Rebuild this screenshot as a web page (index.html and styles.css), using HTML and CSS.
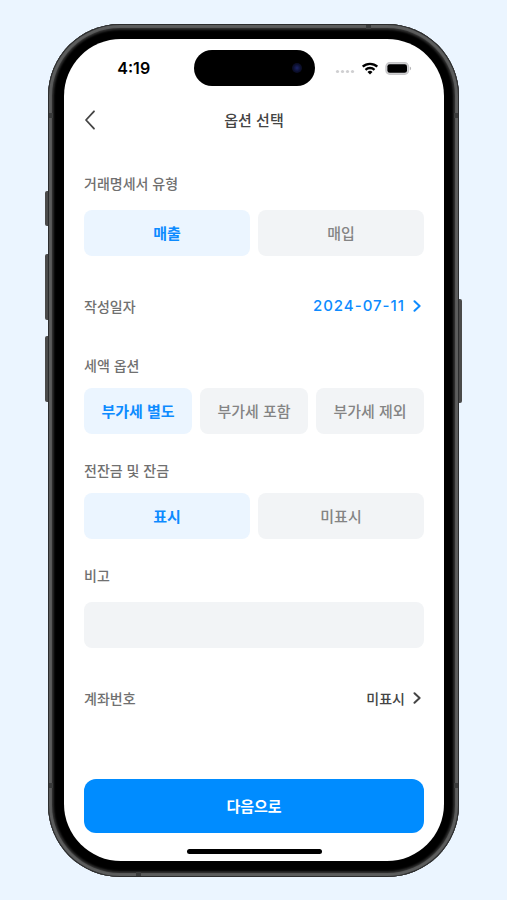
FILE: index.html
```html
<!DOCTYPE html>
<html lang="ko">

<head>
  <meta charset="UTF-8">
  <meta name="viewport" content="width=device-width, initial-scale=1.0">
  <title>옵션 선택</title>
  <link rel="stylesheet" href="styles.css">
</head>
<body>
  <div class="phone">
    <!-- Side buttons -->
    <span class="key key-action"></span>
    <span class="key key-up"></span>
    <span class="key key-down"></span>
    <span class="key key-power"></span>

    <!-- Antenna bands -->
    <span class="band band-top"></span>
    <span class="band band-bottom"></span>
    <span class="band band-side band-left band-high"></span>
    <span class="band band-side band-right band-high"></span>
    <span class="band band-side band-left band-low"></span>
    <span class="band band-side band-right band-low"></span>

    <div class="screen">
      <!-- Status bar -->
      <div class="status">
        <span class="time">4:19</span>
        <div class="island"><span class="camera"></span></div>
        <div class="status-icons">
          <svg width="20" height="12" viewBox="0 0 20 12" fill="#cfcfd1">
            <circle cx="2.5" cy="9.5" r="1.6"/>
            <circle cx="7.5" cy="9.5" r="1.6"/>
            <circle cx="12.5" cy="9.5" r="1.6"/>
            <circle cx="17.5" cy="9.5" r="1.6"/>
          </svg>
          <svg width="18" height="13" viewBox="0 0 18 13" fill="none" stroke="#000" stroke-width="2.3">
            <path d="M1.7 4.7a10.6 10.6 0 0 1 14.6 0"/>
            <path d="M4.5 7.8a6.5 6.5 0 0 1 9 0"/>
            <path d="M9 12.4L6.5 9.9a3.6 3.6 0 0 1 5 0z" fill="#000" stroke="none"/>
          </svg>
          <svg width="27" height="13" viewBox="0 0 27 13">
            <rect x="0.9" y="0.7" width="22.6" height="11.6" rx="3.8" fill="#d2d2d4" stroke="#c6c6c8" stroke-width="1.2"/>
            <rect x="2.4" y="2.2" width="19.6" height="8.6" rx="2.4" fill="#000"/>
            <path d="M24.8 4.6c1.8.6 1.8 3.2 0 3.8z" fill="#b5b5b7"/>
          </svg>
        </div>
      </div>

      <!-- Navigation bar -->
      <header class="navbar">
        <button class="back" type="button" aria-label="뒤로">
          <svg width="12" height="20" viewBox="0 0 12 20" fill="none" stroke="#444" stroke-width="1.8" stroke-linecap="round" stroke-linejoin="round">
            <path d="M10 1.3L2 10l8 8.7"/>
          </svg>
        </button>
        <h1>옵션 선택</h1>
      </header>

      <form class="options">
        <section class="group group-loose">
          <h2 class="label">거래명세서 유형</h2>
          <div class="choices">
            <button class="choice selected" type="button">매출</button>
            <button class="choice" type="button">매입</button>
          </div>
        </section>

        <section class="row">
          <h2 class="label">작성일자</h2>
          <button class="value date" type="button">
            2024-07-11
            <svg width="8" height="12" viewBox="0 0 8 12" fill="none" stroke="currentColor" stroke-width="2" stroke-linecap="round" stroke-linejoin="round">
              <path d="M1.5 1.3L6.6 6l-5.1 4.7"/>
            </svg>
          </button>
        </section>

        <section class="group">
          <h2 class="label">세액 옵션</h2>
          <div class="choices">
            <button class="choice selected" type="button">부가세 별도</button>
            <button class="choice" type="button">부가세 포함</button>
            <button class="choice" type="button">부가세 제외</button>
          </div>
        </section>

        <section class="group">
          <h2 class="label">전잔금 및 잔금</h2>
          <div class="choices">
            <button class="choice selected" type="button">표시</button>
            <button class="choice" type="button">미표시</button>
          </div>
        </section>

        <section class="group group-loose">
          <label class="label" for="note">비고</label>
          <input class="note" type="text" id="note" name="note">
        </section>

        <section class="row">
          <h2 class="label">계좌번호</h2>
          <button class="value" type="button">
            미표시
            <svg width="8" height="12" viewBox="0 0 8 12" fill="none" stroke="currentColor" stroke-width="2" stroke-linecap="round" stroke-linejoin="round">
              <path d="M1.5 1.3L6.6 6l-5.1 4.7"/>
            </svg>
          </button>
        </section>

        <button class="next" type="submit">다음으로</button>
      </form>

      <div class="home-bar"></div>
    </div>
  </div>
</body>
</html>
```

FILE: styles.css
```css
* {
  box-sizing: border-box;
}

body {
  font-family: "Noto Sans CJK KR", sans-serif;
  margin: 0;
  padding: 24px 48px 23px;
  display: flex;
  justify-content: center;
  background-color: #ebf5ff;
  min-height: 100vh;
}

h1, h2 {
  margin: 0;
}

button, input {
  font-family: inherit;
  border: none;
  margin: 0;
  padding: 0;
}

button {
  background: none;
  cursor: pointer;
}

svg {
  display: block;
}

/* Phone body */
.phone {
  position: relative;
  display: flex;
  width: 100%;
  max-width: 430px;
  padding: 15px 15px 16px 16px;
  border-radius: 72px;
  background-color: #000;
  box-shadow: inset 0 0 0 1px #2c2d2e, inset 0 0 1px 4px #5c5d5d, inset 0 0 2px 6px #2b2b2b;
}

.key {
  position: absolute;
  width: 3px;
  background-color: #4a4a4a;
}

.key-action {
  left: -3px;
  top: 167px;
  height: 35px;
  border-radius: 2px 0 0 2px;
}

.key-up,
.key-down {
  left: -3px;
  top: 230px;
  height: 66px;
  border-radius: 2px 0 0 2px;
}

.key-down {
  top: 312px;
}

.key-power {
  right: -3px;
  top: 275px;
  height: 104px;
  border-radius: 0 2px 2px 0;
}

.band {
  position: absolute;
  width: 5px;
  height: 4px;
  background-color: #3a3b3b;
}

.band-top {
  top: 1px;
  right: 88px;
}

.band-bottom {
  bottom: 1px;
  left: 88px;
}

.band-side {
  width: 4px;
  height: 5px;
}

.band-left {
  left: 1px;
}

.band-right {
  right: 1px;
}

.band-high {
  top: 89px;
}

.band-low {
  bottom: 89px;
}

.screen {
  flex: 1;
  display: flex;
  flex-direction: column;
  padding: 0 20px 7px;
  border-radius: 57px;
  background-color: #fff;
}

/* Status bar */
.status {
  display: grid;
  grid-template-columns: 1fr 121px 1fr;
  align-items: center;
  height: 58px;
}

.time {
  font-family: Inter, sans-serif;
  font-size: 16px;
  font-weight: 600;
  text-align: center;
  color: #000;
  padding-right: 10px;
}

.island {
  display: flex;
  align-items: center;
  justify-content: flex-end;
  height: 36px;
  padding-right: 13px;
  border-radius: 18px;
  background-color: #000;
}

.camera {
  width: 10px;
  height: 10px;
  border-radius: 50%;
  background: radial-gradient(circle, #1c2468 0, #0c1030 50%, #05060f 100%);
}

.status-icons {
  display: flex;
  align-items: center;
  justify-content: flex-end;
  gap: 6px;
  padding-right: 12px;
}

/* Navigation bar */
.navbar {
  display: grid;
  grid-template-columns: 40px 1fr 40px;
  align-items: center;
  height: 46px;
}

.back {
  width: 40px;
  height: 40px;
  display: flex;
  align-items: center;
}

.navbar h1 {
  font-size: 15px;
  font-weight: 500;
  line-height: 20px;
  text-align: center;
  color: #444;
}

/* Options */
.options {
  flex: 1;
  display: flex;
  flex-direction: column;
  padding-top: 30px;
}

.label {
  display: block;
  font-size: 14px;
  font-weight: 500;
  line-height: 20px;
  color: #707070;
}

.group {
  display: flex;
  flex-direction: column;
  gap: 13px;
  margin-bottom: 26px;
}

.group-loose {
  gap: 17px;
  margin-bottom: 40px;
}

.group-loose + .row {
  margin-bottom: 39px;
}

.row {
  display: flex;
  justify-content: space-between;
  align-items: center;
}

.choices {
  display: flex;
  gap: 8px;
}

.choice {
  flex: 1;
  height: 46px;
  border-radius: 8px;
  font-size: 15px;
  font-weight: 500;
  line-height: 20px;
  color: #848484;
  background-color: #f2f4f6;
}

.choice.selected {
  font-weight: 700;
  color: #0d8bff;
  background-color: #ebf5ff;
}

.note {
  width: 100%;
  height: 46px;
  padding: 0 16px;
  border-radius: 8px;
  font-size: 15px;
  background-color: #f2f4f6;
}

.value {
  display: flex;
  align-items: center;
  gap: 8px;
  padding-right: 3px;
  font-size: 14px;
  font-weight: 500;
  line-height: 20px;
  color: #444;
}

.date {
  font-family: Inter, sans-serif;
  font-size: 15px;
  letter-spacing: 1px;
  color: #0d8bff;
}

.next {
  height: 54px;
  margin-top: auto;
  margin-bottom: 16px;
  border-radius: 12px;
  font-size: 15px;
  font-weight: 700;
  line-height: 20px;
  color: #fff;
  background-color: #008cff;
}

.home-bar {
  width: 135px;
  height: 5px;
  margin: 0 auto;
  border-radius: 3px;
  background-color: #000;
}
```
